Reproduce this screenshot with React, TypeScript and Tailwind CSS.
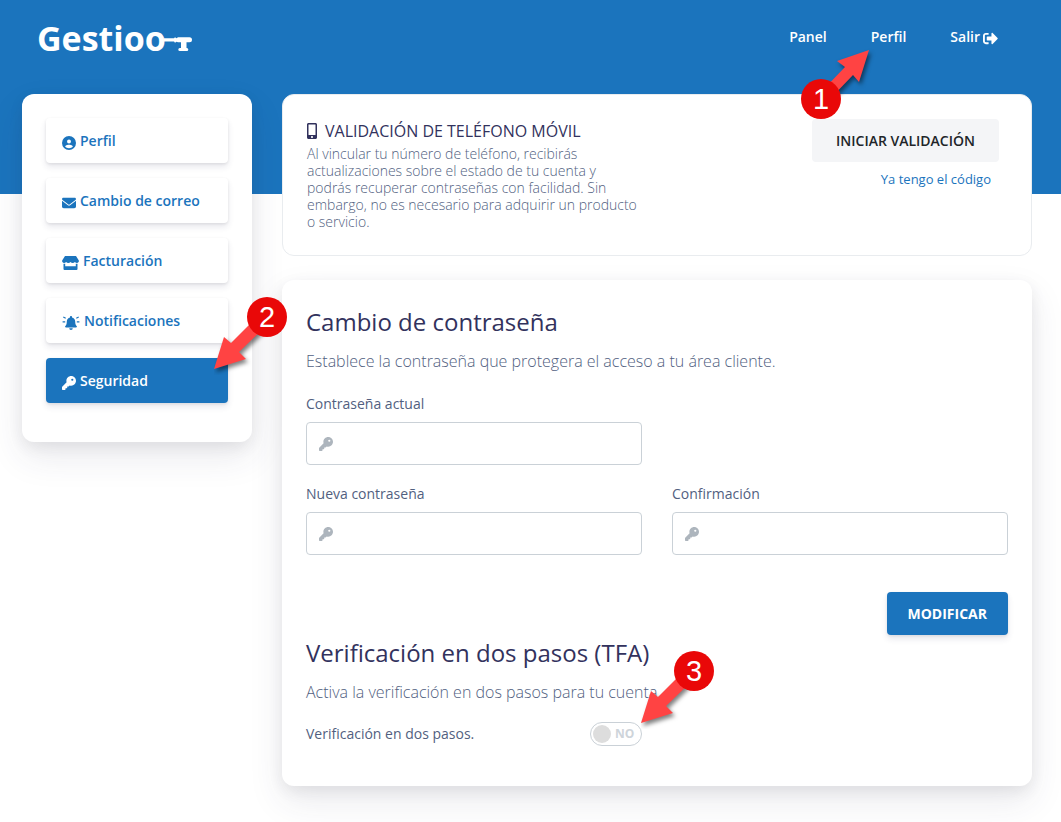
import type { ReactNode } from 'react'
import { FaCircleUser, FaEnvelope, FaKey } from 'react-icons/fa6'
import { FaMobileAlt, FaSignOutAlt } from 'react-icons/fa'
import clsx from 'clsx'

const cardShadow = 'shadow-[0_15px_35px_rgba(50,50,93,0.1),0_5px_15px_rgba(0,0,0,0.07)]'
const buttonShadow = 'shadow-[0_4px_6px_rgba(50,50,93,0.11),0_1px_3px_rgba(0,0,0,0.08)]'

export default function App() {
  return (
    <div className="bg-white font-['Open_Sans','Noto_Sans',sans-serif] text-[#525f7f]">
      <Header />
      {/* Blue band behind the top of the cards */}
      <div className="h-25 bg-[#1b74bd]" />

      <main className="relative -mt-25 grid grid-cols-[230px_minmax(0,1fr)] items-start gap-[30px] pl-[22px] pr-[29px] pb-9">
        <Sidebar />
        <div className="flex flex-col gap-6">
          <PhoneValidation />
          <section className={clsx('rounded-xl bg-white px-6 pt-6 pb-10', cardShadow)}>
            <PasswordForm />
            <TwoStep />
          </section>
        </div>
      </main>
    </div>
  )
}

function Header() {
  return (
    <header className="relative z-10 bg-[#1b74bd] pl-[37px] pr-[63px] pt-4 pb-[34px]">
      <div className="flex items-center justify-between">
        <Logo />
        <nav className="mb-0.5 flex gap-11 text-sm font-semibold text-white">
          <a href="#panel">Panel</a>
          <a href="#perfil" className="relative">
            Perfil
            <MarkerUp n={1} className="-left-[70px] top-[21px]" />
          </a>
          <a href="#salir" className="flex items-center gap-[3px]">
            Salir
            <FaSignOutAlt size={15} className="mt-0.5" />
          </a>
        </nav>
      </div>
    </header>
  )
}

function Logo() {
  return (
    <a href="#inicio" className="flex items-center text-[34px] leading-[44px] font-bold text-white">
      Gestioo
      <svg width="28" height="14" viewBox="0 0 28 14" className="-ml-0.5 mt-3" fill="currentColor">
        <path d="M0 1.300h10l1-1 1.500 1 1.500-1H25.500a2.500 2.500 0 0 1 0 5H22.500V11h.3a1.500 1.500 0 0 1 0 3h-7a1.500 1.500 0 0 1 0-3h1.200V5.300h-3l-1.500-.5-1.500 1-1-1.300H0z" />
      </svg>
    </a>
  )
}

function Sidebar() {
  return (
    <aside className={clsx('relative z-10 rounded-xl bg-white px-6 pt-6 pb-[39px]', cardShadow)}>
      <nav className="flex flex-col gap-[15px]">
        <SidebarLink href="#perfil" icon={<FaCircleUser size={14} />}>Perfil</SidebarLink>
        <SidebarLink href="#correo" icon={<FaEnvelope size={14} />}>Cambio de correo</SidebarLink>
        <SidebarLink href="#facturacion" icon={<StoreIcon />}>Facturación</SidebarLink>
        <SidebarLink href="#notificaciones" icon={<BellIcon />}>Notificaciones</SidebarLink>
        <SidebarLink href="#seguridad" icon={<FaKey size={14} />} active>
          Seguridad
          <MarkerDown n={2} className="-right-[62px] -top-[61px]" />
        </SidebarLink>
      </nav>
    </aside>
  )
}

interface SidebarLinkProps {
  href: string
  icon: ReactNode
  active?: boolean
  children: ReactNode
}

function SidebarLink({ href, icon, active, children }: SidebarLinkProps) {
  return (
    <a
      href={href}
      className={clsx(
        'relative flex h-[45px] items-center gap-1 rounded px-4 text-sm font-semibold',
        buttonShadow,
        active ? 'bg-[#1b74bd] text-white' : 'bg-white text-[#1b74bd]'
      )}
    >
      <span className="mt-1">{icon}</span>
      {children}
    </a>
  )
}

function PhoneValidation() {
  return (
    <section className="flex min-h-[162px] items-start justify-between rounded-xl border border-[#e9ecef] bg-white px-6 pt-6">
      <div className="max-w-[336px]">
        <h2 className="flex items-center gap-2 text-base leading-6 font-normal text-[#32325d]">
          <FaMobileAlt className="h-4 w-2.5" />
          VALIDACIÓN DE TELÉFONO MÓVIL
        </h2>
        <p className="mt-0.5 text-sm leading-[17px] font-light">
          Al vincular tu número de teléfono, recibirás actualizaciones sobre el estado de tu cuenta y
          podrás recuperar contraseñas con facilidad. Sin embargo, no es necesario para adquirir un
          producto o servicio.
        </p>
      </div>
      <div className="mr-2 flex flex-col items-end">
        <button type="button" className="h-[43px] rounded bg-[#f4f5f7] px-6 text-sm font-semibold text-[#212529]">
          INICIAR VALIDACIÓN
        </button>
        <a href="#codigo" className="mt-[7px] mr-2 text-[13px] leading-5 text-[#1b74bd]">
          Ya tengo el código
        </a>
      </div>
    </section>
  )
}

function PasswordForm() {
  return (
    <form>
      <h2 className="text-2xl leading-9 text-[#32325d]">Cambio de contraseña</h2>
      <p className="mt-2 text-base leading-[26px] font-light">
        Establece la contraseña que protegera el acceso a tu área cliente.
      </p>
      <div className="mt-5 grid grid-cols-2 gap-x-[30px] gap-y-[19px]">
        <PasswordField id="actual" label="Contraseña actual" />
        <div />
        <PasswordField id="nueva" label="Nueva contraseña" />
        <PasswordField id="confirmacion" label="Confirmación" />
      </div>
      <div className="mt-[37px] flex justify-end">
        <button
          type="button"
          className={clsx('h-[43px] rounded bg-[#1b74bd] px-[21px] text-sm font-bold text-white', buttonShadow)}
        >
          MODIFICAR
        </button>
      </div>
    </form>
  )
}

interface PasswordFieldProps {
  id: string
  label: string
}

function PasswordField({ id, label }: PasswordFieldProps) {
  return (
    <div>
      <label htmlFor={id} className="block text-sm leading-5">
        {label}
      </label>
      <div className="mt-2 flex h-[43px] items-center rounded border border-[#cad1d7] px-3">
        <FaKey size={14} className="shrink-0 text-[#adb5bd]" />
        <input id={id} type="password" className="ml-3 h-full min-w-0 flex-1 bg-transparent text-sm outline-none" />
      </div>
    </div>
  )
}

function TwoStep() {
  return (
    <div>
      <h2 className="text-2xl leading-9 text-[#32325d]">Verificación en dos pasos (TFA)</h2>
      <p className="mt-2 text-base leading-[26px] font-light">
        Activa la verificación en dos pasos para tu cuenta.
      </p>
      <div className="mt-[17px] grid grid-cols-2 gap-x-[30px]">
        <label className="flex items-center justify-between text-sm leading-6">
          Verificación en dos pasos.
          <span className="relative flex h-6 w-[52px] items-center gap-1 rounded-full border border-[#cad1d7] pl-0.5">
            <input type="checkbox" className="size-[18px] appearance-none rounded-full bg-[#ddd]" />
            <span className="text-xs font-bold text-[#ced4da]">NO</span>
            <MarkerDown n={3} className="left-[50px] -top-[72px]" />
          </span>
        </label>
      </div>
    </div>
  )
}

interface MarkerProps {
  n: number
  className: string
}

// Numbered pin whose arrow points up and to the right
function MarkerUp({ n, className }: MarkerProps) {
  return (
    <svg
      width="76"
      height="76"
      viewBox="0 0 76 76"
      className={clsx('pointer-events-none absolute max-w-none', className)}
    >
      <path
        d="M68 2 36 13l8 6-24 25 8 8 24-25 6 7z"
        fill="#ff4343"
        className="drop-shadow-[2px_3px_2px_rgba(0,0,0,0.5)]"
      />
      <MarkerDot n={n} cx={20} cy={51} />
    </svg>
  )
}

// Same pin, pointing down and to the left
function MarkerDown({ n, className }: MarkerProps) {
  return (
    <svg
      width="76"
      height="78"
      viewBox="0 0 76 78"
      className={clsx('pointer-events-none absolute max-w-none', className)}
    >
      <path
        d="M0 72 10 40l7 6 26-26 9 9-27 26 7 7z"
        fill="#ff4343"
        className="drop-shadow-[2px_3px_2px_rgba(0,0,0,0.5)]"
      />
      <MarkerDot n={n} cx={53} cy={20} />
    </svg>
  )
}

function MarkerDot({ n, cx, cy }: { n: number; cx: number; cy: number }) {
  return (
    <g>
      <circle cx={cx} cy={cy} r="20" fill="#e90808" />
      <text
        x={cx}
        y={cy + 10}
        textAnchor="middle"
        fill="#fff"
        className="font-['Liberation_Sans',sans-serif] text-[29px] font-normal"
      >
        {n}
      </text>
    </g>
  )
}

function StoreIcon() {
  return (
    <svg width="17" height="14" viewBox="0 0 17 14" fill="currentColor">
      <path d="M3 0h11l2.700 4.200c.6 1.400-.3 2.800-1.700 2.800-.9 0-1.500-.4-2.100-1-.6.6-1.300 1-2.200 1s-1.600-.4-2.200-1c-.6.600-1.300 1-2.200 1s-1.600-.4-2.200-1c-.6.600-1.200 1-2.100 1C.6 7-.3 5.600.3 4.200z" />
      <path d="M1.500 7.700h1.700v2.500h10.600V7.700h1.700V13a1 1 0 0 1-1 1h-12a1 1 0 0 1-1-1z" />
    </svg>
  )
}

function BellIcon() {
  return (
    <svg width="18" height="14" viewBox="0 0 18 14" fill="currentColor">
      <path d="M9 0c.6 0 1 .4 1 1v.4c1.900.4 3.200 2 3.200 4 0 2.700.7 3.800 1.500 4.600.5.600.100 1.500-.7 1.500H4c-.8 0-1.200-.9-.7-1.500.8-.8 1.500-1.900 1.500-4.600 0-2 1.300-3.600 3.200-4V1c0-.6.4-1 1-1zM7.200 12.300h3.600a1.800 1.700 0 0 1-3.600 0z" />
      <path
        d="M.6 5.800h2.600M14.800 5.800h2.600M1.300 1l2.400 1.200M16.700 1l-2.400 1.200"
        stroke="currentColor"
        strokeWidth="1.200"
      />
    </svg>
  )
}
